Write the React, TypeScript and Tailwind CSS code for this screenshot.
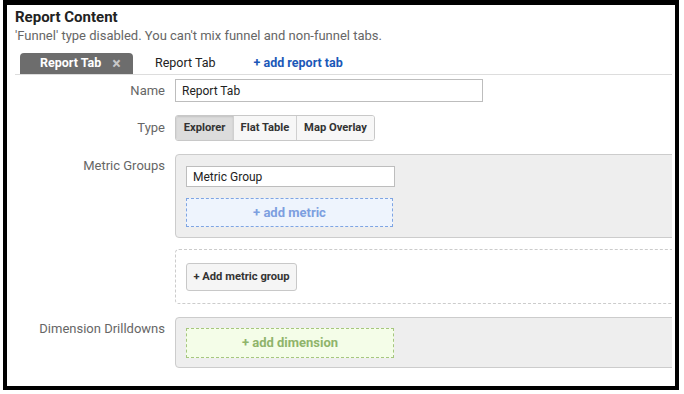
import React from 'react';

const labelCls = 'w-[158px] shrink-0 text-right text-[13px] leading-4 text-[#666]';

function FieldRow({ label, top = false, children }: { label: string; top?: boolean; children: React.ReactNode }) {
  return (
    <div className={`flex gap-[10px] ${top ? 'items-start' : 'items-center'}`}>
      <div className={`${labelCls} ${top ? 'pt-[4px]' : ''}`}>{label}</div>
      {children}
    </div>
  );
}

export default function App() {
  const types = [
    { name: 'Explorer', w: 'w-[57px]', active: true },
    { name: 'Flat Table', w: 'w-[63px]', active: false },
    { name: 'Map Overlay', w: 'w-[78px]', active: false },
  ];

  return (
    <div className="w-[684px] h-[394px] bg-white pl-[3px] font-['Roboto',sans-serif]">
      <div className="w-[676px] h-[390px] border-x-4 border-t-[5px] border-b-4 border-black bg-white overflow-hidden pr-[3px]">
        <div className="h-full overflow-hidden">
          {/* Header */}
          <div className="pl-[8px] pt-[3px]">
            <h2 className="h-[18px] text-[15px] leading-[18px] font-bold text-[#222]">Report Content</h2>
            <p className="mt-[2px] h-[16px] text-[13px] leading-4 text-[#666]">
              'Funnel' type disabled. You can't mix funnel and non-funnel tabs.
            </p>
          </div>

          {/* Tabs */}
          <div className="ml-[8px] mt-[9px] flex items-end border-b border-[#dddddd] pl-[5px]">
            <div className="flex h-[21px] w-[113px] items-center rounded-t-[4px] bg-[#6d6d6d] pl-[20px]">
              <span className="text-[12.5px] font-bold text-white">Report Tab</span>
              <span className="ml-[11px] text-[16px] leading-4 font-bold text-[#c8c8c8]">×</span>
            </div>
            <div className="ml-[22px] flex h-[21px] items-center text-[12.5px] text-[#222]">Report Tab</div>
            <div className="ml-[38px] flex h-[21px] items-center text-[12.5px] font-bold text-[#1a58b8]">+ add report tab</div>
          </div>

          {/* Form */}
          <div className="mt-[4px] flex flex-col">
            <FieldRow label="Name">
              <div className="flex h-[23px] w-[308px] items-center border border-[#bdbdbd] bg-white pl-[6px] text-[12px] text-[#222]">
                Report Tab
              </div>
            </FieldRow>

            <div className="mt-[13px]">
              <FieldRow label="Type">
                <div className="flex h-[26px] overflow-hidden rounded-[3px] border border-[#c8c8c8]">
                  {types.map((t, i) => (
                    <div
                      key={t.name}
                      className={`${t.w} flex items-center justify-center text-[11.2px] font-bold text-[#333] ${
                        i > 0 ? 'border-l border-[#d0d0d0]' : ''
                      } ${t.active ? 'bg-[#dcdcdc] shadow-[inset_0_1px_2px_rgba(0,0,0,0.12)]' : 'bg-[#f7f7f7]'}`}
                    >
                      {t.name}
                    </div>
                  ))}
                </div>
              </FieldRow>
            </div>

            <div className="mt-[13px]">
              <FieldRow label="Metric Groups" top>
                <div className="h-[84px] w-[520px] shrink-0 rounded-[4px] border border-[#cccccc] bg-[#eeeeee] pl-[10px] pt-[11px]">
                  <div className="flex h-[21px] w-[209px] items-center border border-[#bdbdbd] bg-white pl-[6px] text-[12px] text-[#222]">
                    Metric Group
                  </div>
                  <div className="mt-[11px] flex h-[29px] w-[207px] items-center justify-center border border-dashed border-[#7fa5e3] bg-[#eef4fd] text-[13px] font-bold text-[#7d9fe0]">
                    + add metric
                  </div>
                </div>
              </FieldRow>
            </div>

            <div className="mt-[11px] flex gap-[10px]">
              <div className="w-[158px] shrink-0" />
              <div className="h-[55px] w-[520px] shrink-0 rounded-[4px] border border-dashed border-[#cccccc] pl-[10px] pt-[13px]">
                <div className="flex h-[28px] w-[111px] items-center justify-center rounded-[3px] border border-[#c8c8c8] bg-[#f5f5f5] text-[11.2px] font-bold text-[#333]">
                  + Add metric group
                </div>
              </div>
            </div>

            <div className="mt-[13px]">
              <FieldRow label="Dimension Drilldowns" top>
                <div className="h-[51px] w-[520px] shrink-0 rounded-[4px] border border-[#cccccc] bg-[#eeeeee] pl-[10px] pt-[10px]">
                  <div className="flex h-[30px] w-[208px] items-center justify-center border border-dashed border-[#a6c77e] bg-[#f4fde8] text-[13px] font-bold text-[#8fb46b]">
                    + add dimension
                  </div>
                </div>
              </FieldRow>
            </div>
          </div>
        </div>
      </div>
    </div>
  );
}
